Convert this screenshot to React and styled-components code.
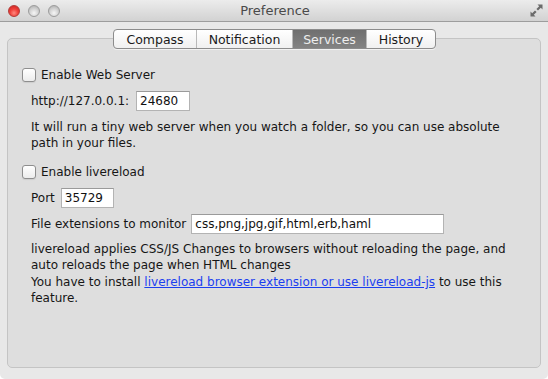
import React, { useState } from 'react';
import styled, { createGlobalStyle } from 'styled-components';

const GlobalStyle = createGlobalStyle`
    html, body {
        margin: 0;
        padding: 0;
        background: #ffffff;
    }
    body {
        font-family: "DejaVu Sans", "Liberation Sans", sans-serif;
        font-size: 12px;
        color: #161616;
    }
`

const Window = styled.div`
    width: 548px;
    height: 379px;
    display: flex;
    flex-direction: column;
    background: #e8e8e8;
    border-radius: 0 0 5px 5px;
    overflow: hidden;
`
const TitleBar = styled.div`
    height: 21px;
    flex: none;
    display: flex;
    align-items: center;
    position: relative;
    background: linear-gradient(#ececec, #d2d2d2);
    border-bottom: 1px solid #9d9d9d;
`
const Lights = styled.div`
    display: flex;
    gap: 8px;
    padding-left: 8px;
`
const Light = styled.span`
    width: 12px;
    height: 12px;
    border-radius: 50%;
    box-sizing: border-box;
    border: 1px solid ${p => p.$red ? '#b23b38' : '#9c9c9c'};
    background: ${p => p.$red
        ? 'radial-gradient(circle at 50% 70%, #ff8a80 0%, #f0423c 45%, #c8201c 100%)'
        : 'radial-gradient(circle at 50% 70%, #f6f6f6 0%, #d2d2d2 50%, #a8a8a8 100%)'};
`
const Title = styled.div`
    flex: 1;
    text-align: center;
    font-size: 13px;
    color: #4a4a4a;
    margin-right: 58px;
`
const Resize = styled.svg`
    position: absolute;
    right: 4px;
    top: 3px;
`
const Body = styled.div`
    flex: 1;
    display: flex;
    flex-direction: column;
    padding: 7px 7px 11px 7px;
`
const TabBar = styled.div`
    display: flex;
    justify-content: center;
    padding-left: 1px;
    position: relative;
    z-index: 1;
`
const Segments = styled.div`
    display: flex;
    height: 20px;
    box-sizing: border-box;
    border: 1px solid #8c8c8c;
    border-radius: 4px;
    overflow: hidden;
    background: linear-gradient(#ffffff, #f0f0f0);
    box-shadow: 0 1px 0 rgba(255,255,255,0.6);
`
const Tab = styled.div`
    width: ${p => p.$w}px;
    display: flex;
    align-items: center;
    justify-content: center;
    font-size: 12.5px;
    color: ${p => p.$active ? '#eeeeee' : '#1a1a1a'};
    background: ${p => p.$active ? 'linear-gradient(#6f6f6f, #838383)' : 'transparent'};
    border-left: ${p => p.$first ? 'none' : '1px solid #b9b9b9'};
    cursor: default;
`
const Panel = styled.div`
    flex: 1;
    margin-top: -11px;
    background: #dedede;
    border: 1px solid #c4c4c4;
    border-radius: 5px;
    padding: 29px 14px 0 14px;
    display: flex;
    flex-direction: column;
`
const CheckRow = styled.label`
    display: flex;
    align-items: center;
    height: 14px;
    margin-top: ${p => p.$mt || 0}px;
    gap: 5px;
`
const Box = styled.input`
    appearance: none;
    margin: 0;
    width: 14px;
    height: 14px;
    box-sizing: border-box;
    border: 1px solid #8e8e8e;
    border-radius: 3px;
    background: linear-gradient(#ffffff, #ececec);
    box-shadow: 0 1px 1px rgba(0,0,0,0.08);
    &:checked {
        background: linear-gradient(#7fb4f2, #3d85df);
    }
`
const FieldRow = styled.div`
    display: flex;
    align-items: center;
    height: 20px;
    padding-left: 9px;
    margin-top: ${p => p.$mt}px;
    gap: ${p => p.$gap}px;
`
const TextInput = styled.input`
    width: ${p => p.$w}px;
    height: 20px;
    box-sizing: border-box;
    margin: 0;
    padding: 0 3px;
    border: 1px solid #b3b3b3;
    border-top-color: #9a9a9a;
    background: #ffffff;
    font-family: "DejaVu Sans", sans-serif;
    font-size: 12px;
    color: #111;
    outline: none;
`
const Para = styled.p`
    margin: ${p => p.$mt}px 0 0 9px;
    line-height: 16px;
    max-width: 476px;
`
const Link = styled.a`
    color: #1b3ff0;
    text-decoration: underline;
`

const tabs = [
    { name: 'Compass', w: 82 },
    { name: 'Notification', w: 95 },
    { name: 'Services', w: 73 },
    { name: 'History', w: 68 },
];

export default function App() {
    const [active, setActive] = useState('Services');
    const [port, setPort] = useState('24680');
    const [lrPort, setLrPort] = useState('35729');
    const [exts, setExts] = useState('css,png,jpg,gif,html,erb,haml');

    return (
        <>
            <GlobalStyle />
            <Window>
                <TitleBar>
                    <Lights>
                        <Light $red />
                        <Light />
                        <Light />
                    </Lights>
                    <Title>Preference</Title>
                    <Resize width="15" height="15" viewBox="0 0 15 15">
                        <path d="M8.5 1.5 H13.5 V6.5 L11.8 4.8 L9 7.6 L7.4 6 L10.2 3.2 Z" fill="#6b6b6b" />
                        <path d="M6.5 13.5 H1.5 V8.5 L3.2 10.2 L6 7.4 L7.6 9 L4.8 11.8 Z" fill="#6b6b6b" />
                    </Resize>
                </TitleBar>
                <Body>
                    <TabBar>
                        <Segments>
                            {tabs.map((t, i) => (
                                <Tab key={t.name} $w={t.w} $first={i === 0} $active={active === t.name}
                                    onClick={() => setActive(t.name)}>
                                    {t.name}
                                </Tab>
                            ))}
                        </Segments>
                    </TabBar>
                    <Panel>
                        <CheckRow>
                            <Box type="checkbox" />
                            Enable Web Server
                        </CheckRow>
                        <FieldRow $mt={9} $gap={7}>
                            http://127.0.0.1:
                            <TextInput $w={54} value={port} onChange={e => setPort(e.target.value)} />
                        </FieldRow>
                        <Para $mt={8}>
                            It will run a tiny web server when you watch a folder, so you can use absolute path in your files.
                        </Para>
                        <CheckRow $mt={14}>
                            <Box type="checkbox" />
                            Enable livereload
                        </CheckRow>
                        <FieldRow $mt={9} $gap={6}>
                            Port
                            <TextInput $w={53} value={lrPort} onChange={e => setLrPort(e.target.value)} />
                        </FieldRow>
                        <FieldRow $mt={6} $gap={5}>
                            File extensions to monitor
                            <TextInput $w={253} value={exts} onChange={e => setExts(e.target.value)} />
                        </FieldRow>
                        <Para $mt={7}>
                            livereload applies CSS/JS Changes to browsers without reloading the page, and auto reloads the page when HTML changes
                        </Para>
                        <Para $mt={1}>
                            You have to install <Link href="#">livereload browser extension or use livereload-js</Link> to use this feature.
                        </Para>
                    </Panel>
                </Body>
            </Window>
        </>
    );
}
